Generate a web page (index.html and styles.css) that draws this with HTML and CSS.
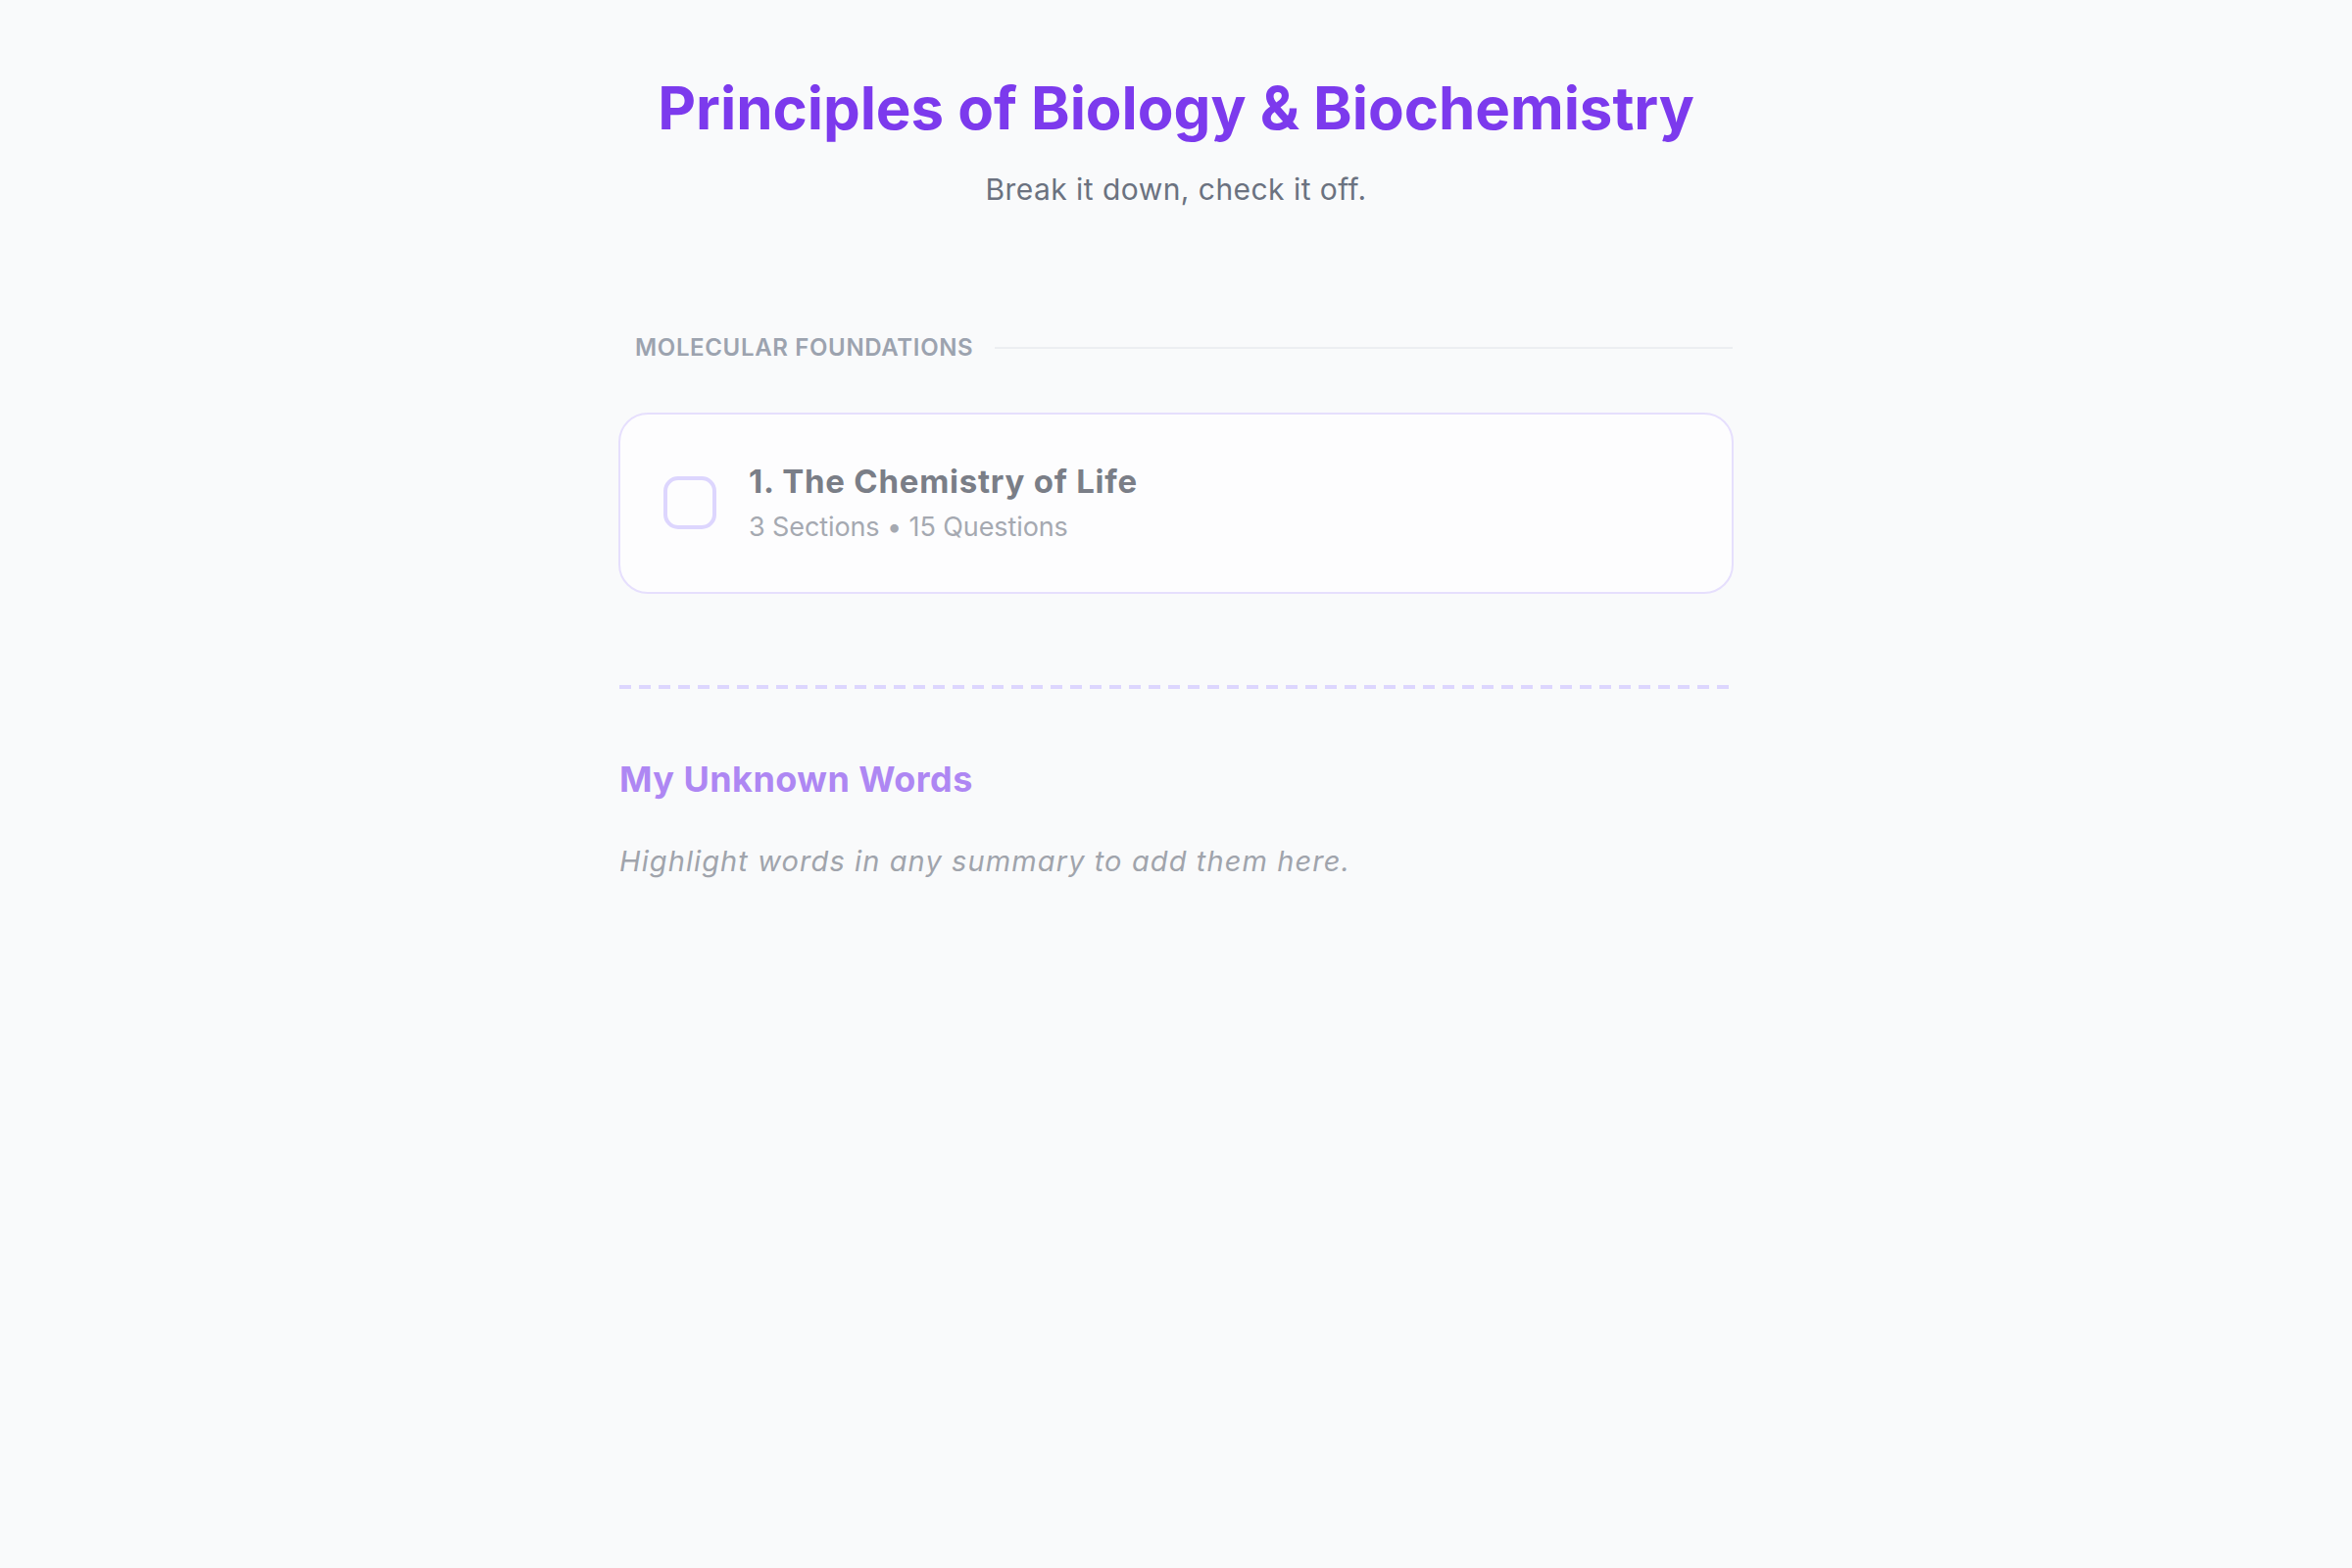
FILE: index.html
```html
<!DOCTYPE html>
<html lang="en">
<head>
<meta charset="utf-8">
<title>Principles of Biology &amp; Biochemistry</title>
<link rel="stylesheet" href="styles.css">
</head>
<body>
<main class="page">
  <header class="hero">
    <h1 class="hero-title">Principles of Biology &amp; Biochemistry</h1>
    <p class="hero-sub">Break it down, check it off.</p>
  </header>

  <section class="unit">
    <div class="unit-head">
      <span class="unit-label">MOLECULAR FOUNDATIONS</span>
      <span class="unit-rule"></span>
    </div>
    <div class="chapter-card">
      <span class="check-box"></span>
      <div class="chapter-text">
        <div class="chapter-title">1. The Chemistry of Life</div>
        <div class="chapter-meta">3 Sections • 15 Questions</div>
      </div>
    </div>
  </section>

  <div class="dash-rule"></div>

  <section class="words">
    <h2 class="words-title">My Unknown Words</h2>
    <p class="words-empty">Highlight words in any summary to add them here.</p>
  </section>
</main>
</body>
</html>
```

FILE: styles.css
```css
html, body {
  margin: 0;
  padding: 0;
  background: #f9fafb;
}
body {
  font-family: Inter, "Noto Sans", "DejaVu Sans", sans-serif;
  min-height: 1600px;
}
.page {
  width: 1136px;
  margin: 0 auto;
  padding-top: 74px;
}
.hero {
  text-align: center;
}
.hero-title {
  margin: 0;
  font-size: 60px;
  line-height: 72px;
  font-weight: 700;
  color: #7c3aed;
  letter-spacing: -0.05px;
}
.hero-sub {
  margin: 29px 0 0;
  font-size: 30px;
  line-height: 36px;
  color: #6b7280;
  letter-spacing: 0.45px;
}
.unit {
  margin-top: 129px;
}
.unit-head {
  display: flex;
  align-items: center;
  gap: 22px;
  padding-left: 16px;
}
.unit-label {
  font-size: 24px;
  line-height: 30px;
  font-weight: 600;
  color: #9ca3af;
  letter-spacing: 0.65px;
  white-space: nowrap;
}
.unit-rule {
  flex: 1;
  height: 2px;
  background: #eceef1;
}
.chapter-card {
  margin: 51px -1px 0;
  display: flex;
  align-items: center;
  gap: 33px;
  padding: 48px 44px 49px;
  background: #fdfdfe;
  border: 2px solid #e6dffd;
  border-radius: 30px;
}
.check-box {
  flex: none;
  width: 54px;
  height: 54px;
  box-sizing: border-box;
  border: 4px solid #ddd6fe;
  border-radius: 15px;
}
.chapter-text {
  display: flex;
  flex-direction: column;
}
.chapter-title {
  font-size: 33px;
  line-height: 40px;
  font-weight: 700;
  color: #7a7e87;
  letter-spacing: 0.75px;
}
.chapter-meta {
  margin-top: 10px;
  font-size: 27px;
  line-height: 34px;
  color: #a5a9b1;
  letter-spacing: -0.1px;
}
.dash-rule {
  margin-top: 93px;
  height: 4px;
  background-image: repeating-linear-gradient(90deg, #ddd6fe 0 12px, transparent 12px 20px);
}
.words-title {
  margin: 70px 0 0;
  font-size: 36px;
  line-height: 44px;
  font-weight: 700;
  color: #ae87f3;
  letter-spacing: 0.45px;
}
.words-empty {
  margin: 44px 0 0;
  font-size: 29px;
  line-height: 36px;
  font-style: italic;
  color: #a0a4ac;
  letter-spacing: 1.1px;
}
```
